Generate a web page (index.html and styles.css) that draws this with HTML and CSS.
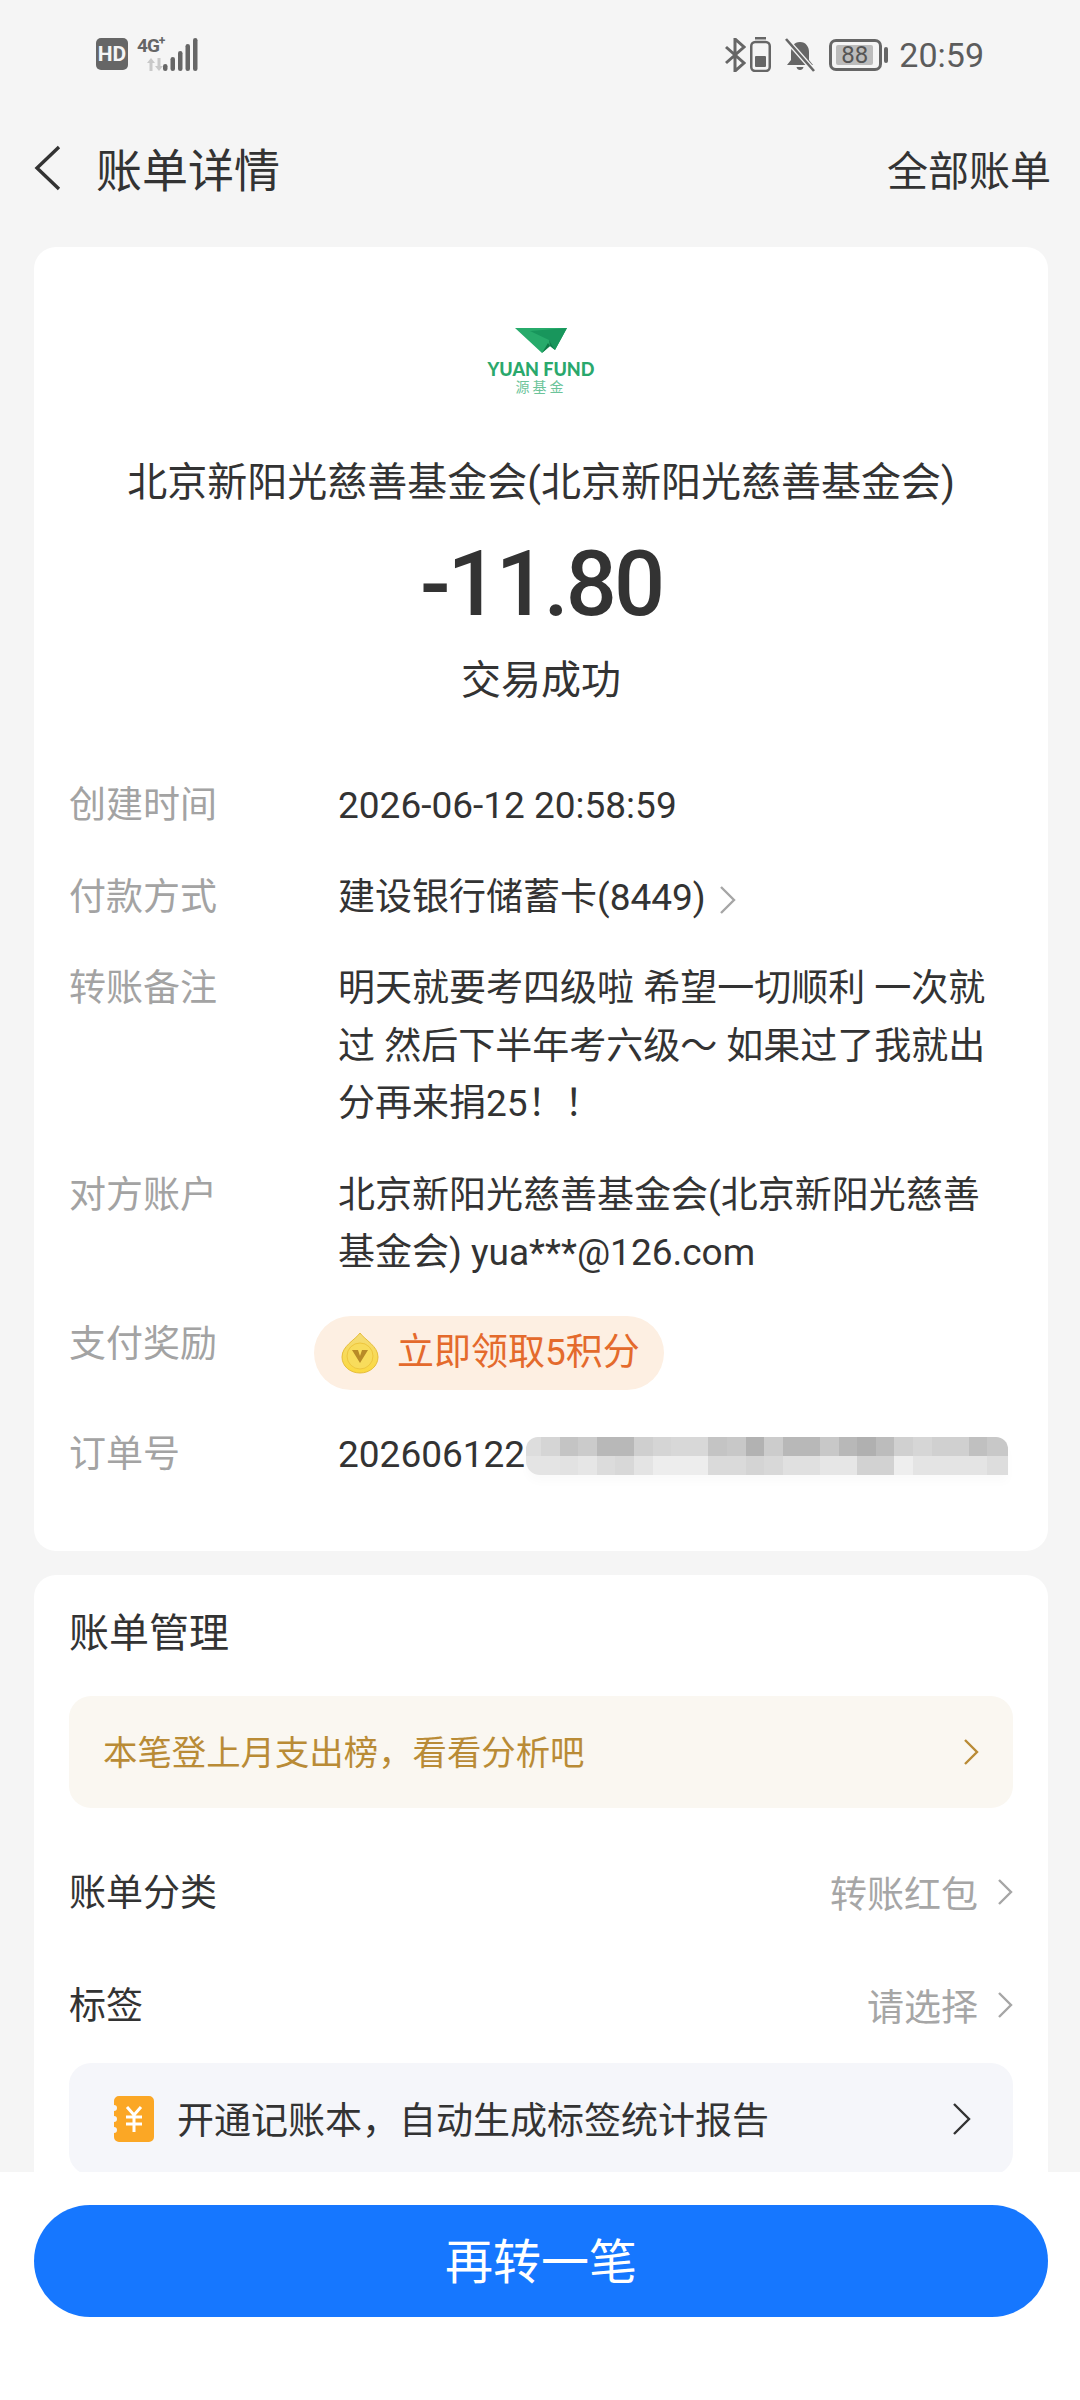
FILE: index.html
```html
<!DOCTYPE html>
<html lang="zh-CN">
<head>
  <meta charset="UTF-8">
  <title>账单详情</title>
  <link rel="stylesheet" href="styles.css">
</head>
<body>
  <div class="page">
    <div class="status-bar">
      <div class="status-left">
        <span class="hd">HD</span>
        <div class="net">
          <span class="net-type">4G<sup>+</sup></span>
          <svg class="net-arrows" width="16" height="13" viewBox="0 0 16 13"><path d="M4 0 L8 5 H5.5 V13 H2.5 V5 H0 Z M12 13 L16 8 H13.5 V0 H10.5 V8 H8 Z" fill="#c9c9c9"/></svg>
        </div>
        <svg class="signal" width="35" height="33" viewBox="0 0 35 33"><g fill="#666"><rect x="0" y="26" width="4.500" height="7" rx="2.250"/><rect x="7.500" y="19" width="4.500" height="14" rx="2.250"/><rect x="15" y="13" width="4.500" height="20" rx="2.250"/><rect x="22.500" y="6" width="4.500" height="27" rx="2.250"/><rect x="30" y="0" width="4.500" height="33" rx="2.250"/></g></svg>
      </div>
      <div class="status-right">
        <svg width="21" height="34" viewBox="0 0 21 34"><path d="M1 9 L19 25 L10 33 V1 L19 9 L1 25" fill="none" stroke="#666" stroke-width="3"/></svg>
        <svg class="mini-batt" width="21" height="35" viewBox="0 0 21 35"><rect x="5" y="0" width="11" height="2.500" fill="#666"/><rect x="1.250" y="5" width="18.500" height="29" rx="4" fill="none" stroke="#666" stroke-width="2.500"/><rect x="5" y="19" width="11" height="11" rx="1" fill="#666"/></svg>
        <svg class="bell" width="32" height="34" viewBox="0 0 32 34"><path d="M16 4 C22 4 25 9 25 14 V22 L29 27 H3 L7 22 V14 C7 9 10 4 16 4 Z M12.500 29 H19.500 C19 33 13 33 12.500 29 Z" fill="#666"/><path d="M2 1 L30 33" stroke="#f5f5f5" stroke-width="5"/><path d="M2 1 L30 33" stroke="#666" stroke-width="2.600"/></svg>
        <div class="battery">
          <div class="battery-body"><span class="battery-level">88</span></div>
          <span class="battery-nub"></span>
        </div>
        <span class="clock">20:59</span>
      </div>
    </div>

    <header class="nav">
      <div class="nav-left">
        <svg class="back" width="28" height="46" viewBox="0 0 28 46"><path d="M25 2 L3 23 L25 44" fill="none" stroke="#333" stroke-width="3.400"/></svg>
        <h1 class="nav-title">账单详情</h1>
      </div>
      <span class="nav-link">全部账单</span>
    </header>

    <main class="content">
      <section class="card detail-card">
        <div class="logo">
          <svg width="52" height="26" viewBox="0 0 52 26"><polygon points="0,0 52,0 40,22 35,18 27,25" fill="#27ab6b"/><polygon points="15,3 52,0 40,22 34,12" fill="#18965c"/><polygon points="27,25 33,15 35,18" fill="#0f7a47"/><polygon points="34,12 40,22 35,18" fill="#0f7f4c"/></svg>
          <span class="logo-en">YUAN FUND</span>
          <span class="logo-cn">源基金</span>
        </div>
        <p class="merchant">北京新阳光慈善基金会(北京新阳光慈善基金会)</p>
        <p class="amount">-11.80</p>
        <p class="result">交易成功</p>

        <dl class="rows">
          <div class="row">
            <dt>创建时间</dt>
            <dd>2026-06-12 20:58:59</dd>
          </div>
          <div class="row">
            <dt>付款方式</dt>
            <dd>建设银行储蓄卡(8449)<svg class="chev-inline" width="18" height="30" viewBox="0 0 18 30"><path d="M2 2 L15 15 L2 28" fill="none" stroke="#a6a6a6" stroke-width="2.400"/></svg></dd>
          </div>
          <div class="row">
            <dt>转账备注</dt>
            <dd>明天就要考四级啦 希望一切顺利 一次就过 然后下半年考六级～ 如果过了我就出分再来捐25！！</dd>
          </div>
          <div class="row">
            <dt>对方账户</dt>
            <dd>北京新阳光慈善基金会(北京新阳光慈善基金会) yua***@126.com</dd>
          </div>
          <div class="row row-reward">
            <dt>支付奖励</dt>
            <dd>
              <span class="reward">
                <svg width="38" height="42" viewBox="0 0 38 42">
                  <defs><linearGradient id="coin" x1="0" y1="0" x2="0" y2="1"><stop offset="0" stop-color="#f4dc78"/><stop offset="1" stop-color="#fbd93f"/></linearGradient></defs>
                  <path d="M19 1 C24 8 37 14 37 25 C37 34 29 41 19 41 C9 41 1 34 1 25 C1 14 14 8 19 1 Z" fill="url(#coin)" stroke="#e6bd3a"/>
                  <circle cx="19" cy="24" r="13" fill="#f8dc5c" stroke="#eec63e"/>
                  <path d="M11 18 H17 L19 24 L21 18 H27 L19 31 Z" fill="#b88a28"/>
                </svg>
                <span>立即领取5积分</span>
              </span>
            </dd>
          </div>
          <div class="row row-order">
            <dt>订单号</dt>
            <dd>202606122<span class="mosaic"></span></dd>
          </div>
        </dl>
      </section>

      <section class="card manage-card">
        <h2 class="manage-title">账单管理</h2>
        <div class="hint">
          <span class="hint-text">本笔登上月支出榜，看看分析吧</span>
          <svg width="16" height="28" viewBox="0 0 16 28"><path d="M2 2 L14 14 L2 26" fill="none" stroke="#b98b36" stroke-width="2.400"/></svg>
        </div>
        <div class="line line-first">
          <span class="line-name">账单分类</span>
          <span class="line-value">转账红包<svg width="16" height="28" viewBox="0 0 16 28"><path d="M2 2 L14 14 L2 26" fill="none" stroke="#a6a6a6" stroke-width="2.400"/></svg></span>
        </div>
        <div class="line">
          <span class="line-name">标签</span>
          <span class="line-value">请选择<svg width="16" height="28" viewBox="0 0 16 28"><path d="M2 2 L14 14 L2 26" fill="none" stroke="#a6a6a6" stroke-width="2.400"/></svg></span>
        </div>
        <div class="promo">
          <svg class="promo-icon" width="42" height="48" viewBox="0 0 42 48"><path d="M6 1 H36 A5 5 0 0 1 41 6 V42 A5 5 0 0 1 36 47 H6 A5 5 0 0 1 1 42 V38 A3 3 0 0 0 1 32 V27 A3 3 0 0 0 1 21 V16 A3 3 0 0 0 1 10 V6 A5 5 0 0 1 6 1 Z" fill="#fba725"/><path d="M14 12 L21 20 L28 12 M13 22 H29 M13 29 H29 M21 20 V37" fill="none" stroke="#fff" stroke-width="3"/></svg>
          <span class="promo-text">开通记账本，自动生成标签统计报告</span>
          <svg width="20" height="34" viewBox="0 0 20 34"><path d="M2 2 L17 17 L2 32" fill="none" stroke="#333" stroke-width="2.400"/></svg>
        </div>
      </section>
    </main>

    <footer class="footer">
      <button class="again">再转一笔</button>
    </footer>
  </div>
</body>
</html>
```

FILE: styles.css
```css
* {
  box-sizing: border-box;
}

body {
  margin: 0;
  background-color: #f5f5f5;
  font-family: Roboto, "Noto Sans CJK SC", sans-serif;
  color: #333;
}

.page {
  width: 1080px;
  height: 2400px;
  display: flex;
  flex-direction: column;
  overflow: hidden;
}

/* status bar */
.status-bar {
  height: 108px;
  flex: none;
  display: flex;
  align-items: flex-start;
  justify-content: space-between;
  padding: 37px 96px 0 96px;
}

.status-left,
.status-right {
  display: flex;
  align-items: center;
}

.hd {
  width: 32px;
  height: 32px;
  border-radius: 5px;
  background-color: #666;
  color: #f5f5f5;
  font-size: 21px;
  font-weight: 700;
  line-height: 32px;
  text-align: center;
}

.net {
  width: 26px;
  margin-left: 9px;
  display: flex;
  flex-direction: column;
  align-items: flex-end;
}

.net-type {
  width: 26px;
  font-size: 19px;
  font-weight: 700;
  line-height: 18px;
  letter-spacing: -1px;
  color: #666;
  white-space: nowrap;
}

.net-type sup {
  font-size: 12px;
  line-height: 0;
}

.net-arrows {
  margin-top: 3px;
}

.signal {
  margin-left: 0;
}

.mini-batt {
  margin-left: 4px;
}

.bell {
  margin-left: 13px;
}

.battery {
  margin-left: 13px;
  display: flex;
  align-items: center;
  gap: 2px;
}

.battery-body {
  width: 53px;
  height: 32px;
  padding: 3px 4px;
  border: 3px solid #666;
  border-radius: 7px;
}

.battery-level {
  display: block;
  width: 37px;
  height: 20px;
  border-radius: 2px;
  background-color: #bcbcbc;
  color: #555;
  font-size: 24px;
  line-height: 20px;
  text-align: center;
}

.battery-nub {
  width: 4px;
  height: 16px;
  border-radius: 2px;
  background-color: #666;
}

.clock {
  margin-left: 11px;
  font-size: 34px;
  line-height: 34px;
  color: #5c5c5c;
}

/* title row */
.nav {
  height: 120px;
  flex: none;
  display: flex;
  align-items: center;
  justify-content: space-between;
  padding: 0 29px 0 34px;
}

.nav-left {
  display: flex;
  align-items: center;
}

.nav-title {
  margin: 0 0 2px 34px;
  font-size: 46px;
  font-weight: 400;
  color: #333;
}

.nav-link {
  font-size: 41px;
  color: #333;
}

/* cards */
.content {
  flex: 1;
  min-height: 0;
  overflow: hidden;
  padding: 19px 32px 0 34px;
}

.card {
  background-color: #fff;
  border-radius: 22px;
}

.detail-card {
  height: 1304px;
  padding: 81px 35px 0;
  text-align: center;
}

.logo {
  display: flex;
  flex-direction: column;
  align-items: center;
  height: 72px;
}

.logo-en {
  margin-top: 5px;
  font-family: Lato, sans-serif;
  font-size: 18px;
  font-weight: 900;
  line-height: 21px;
  color: #2aa86c;
  white-space: nowrap;
}

.logo-cn {
  font-size: 14px;
  line-height: 15px;
  letter-spacing: 3px;
  color: #6cc49a;
}

.merchant {
  margin: 57px -10px 0;
  font-size: 40px;
  line-height: 52px;
  white-space: nowrap;
}

.amount {
  margin: 22px 0 0;
  font-size: 90px;
  font-weight: 500;
  letter-spacing: -3px;
  line-height: 108px;
  color: #333;
}

.result {
  margin: 16px 0 0;
  font-size: 40px;
  line-height: 52px;
}

.rows {
  margin: 70px 0 0;
  text-align: left;
}

.row {
  display: flex;
  padding-bottom: 34px;
  font-size: 37px;
  line-height: 57.5px;
}

.row dt {
  width: 269px;
  flex: none;
  color: #a3a3a3;
}

.row dd {
  margin: 0;
  min-width: 0;
  flex: 1;
  color: #333;
}

.chev-inline {
  margin-left: 13px;
  vertical-align: -5px;
}

.row-reward dd {
  margin-left: -24px;
}

.reward {
  display: inline-flex;
  align-items: center;
  gap: 18px;
  height: 74px;
  padding: 0 24px 0 27px;
  border-radius: 37px;
  background-color: #fdefe2;
  color: #e46a2c;
  font-size: 37px;
}

.row-order {
  margin-top: 2px;
}

.row-order dd {
  position: relative;
  white-space: nowrap;
}

/* blurred-out order number */
.mosaic {
  position: absolute;
  left: 188px;
  top: 11px;
  width: 482px;
  height: 38px;
  border-radius: 12px 12px 0 14px;
  box-shadow: 0 7px 10px rgba(0, 0, 0, 0.02);
  background-image:
    linear-gradient(90deg, #ddd 0 15px, #d5d5d5 15px 34px, #c4c4c4 34px 52px, #cbcbcb 52px 71px, #b8b8b8 71px 108px, #cfcfcf 108px 127px, #d5d5d5 127px 145px, #d8d8d8 145px 182px, #c4c4c4 182px 201px, #c8c8c8 201px 220px, #b2b2b2 220px 238px, #cccccc 238px 257px, #b8b8b8 257px 294px, #c8c8c8 294px 313px, #b8b8b8 313px 331px, #b0b0b0 331px 350px, #bcbcbc 350px 368px, #d0d0d0 368px 387px, #d6d6d6 387px 406px, #d0d0d0 406px 443px, #c0c0c0 443px 461px, #c8c8c8 461px 482px),
    linear-gradient(90deg, #e4e4e4 0 34px, #e2e2e2 34px 52px, #e6e6e6 52px 71px, #dcdcdc 71px 89px, #d8d8d8 89px 108px, #e4e4e4 108px 127px, #ededed 127px 182px, #dadada 182px 220px, #d4d4d4 220px 238px, #d8d8d8 238px 257px, #e0e0e0 257px 294px, #e6e6e6 294px 331px, #d2d2d2 331px 368px, #eeeeee 368px 387px, #e4e4e4 387px 461px, #dddddd 461px 482px);
  background-size: 100% 50%;
  background-position: 0 0, 0 100%;
  background-repeat: no-repeat;
}

.manage-card {
  margin-top: 24px;
  height: 700px;
  padding: 31px 35px 0;
}

.manage-title {
  margin: 0;
  font-size: 40px;
  font-weight: 400;
  line-height: 56px;
}

.hint {
  margin-top: 34px;
  height: 112px;
  padding: 0 34px;
  border-radius: 22px;
  background-color: #faf7f1;
  display: flex;
  align-items: center;
  justify-content: space-between;
  font-size: 34.400px;
  color: #b98b36;
}

.hint-text {
  padding-bottom: 4px;
}

.line {
  height: 113px;
  display: flex;
  align-items: center;
  justify-content: space-between;
  font-size: 37px;
}

.line-first {
  margin-top: 27px;
}

.line-name {
  margin-bottom: 4px;
}

.line-value {
  display: flex;
  align-items: center;
  gap: 19px;
  color: #a6a6a6;
  font-size: 37px;
}

.promo {
  height: 112px;
  margin-top: 2px;
  padding: 0 41px 0 44px;
  border-radius: 22px;
  background-color: #f5f6fa;
  display: flex;
  align-items: center;
  font-size: 37px;
}

.promo-text {
  flex: 1;
  margin-left: 22px;
  padding-bottom: 3px;
}

/* bottom button */
.footer {
  height: 228px;
  flex: none;
  background-color: #fff;
  padding: 33px 32px 0 34px;
}

.again {
  display: block;
  width: 100%;
  height: 112px;
  border: 0;
  border-radius: 56px;
  padding: 0 0 7px;
  background-color: #1677ff;
  color: #fff;
  font-family: inherit;
  font-size: 48px;
}
```
